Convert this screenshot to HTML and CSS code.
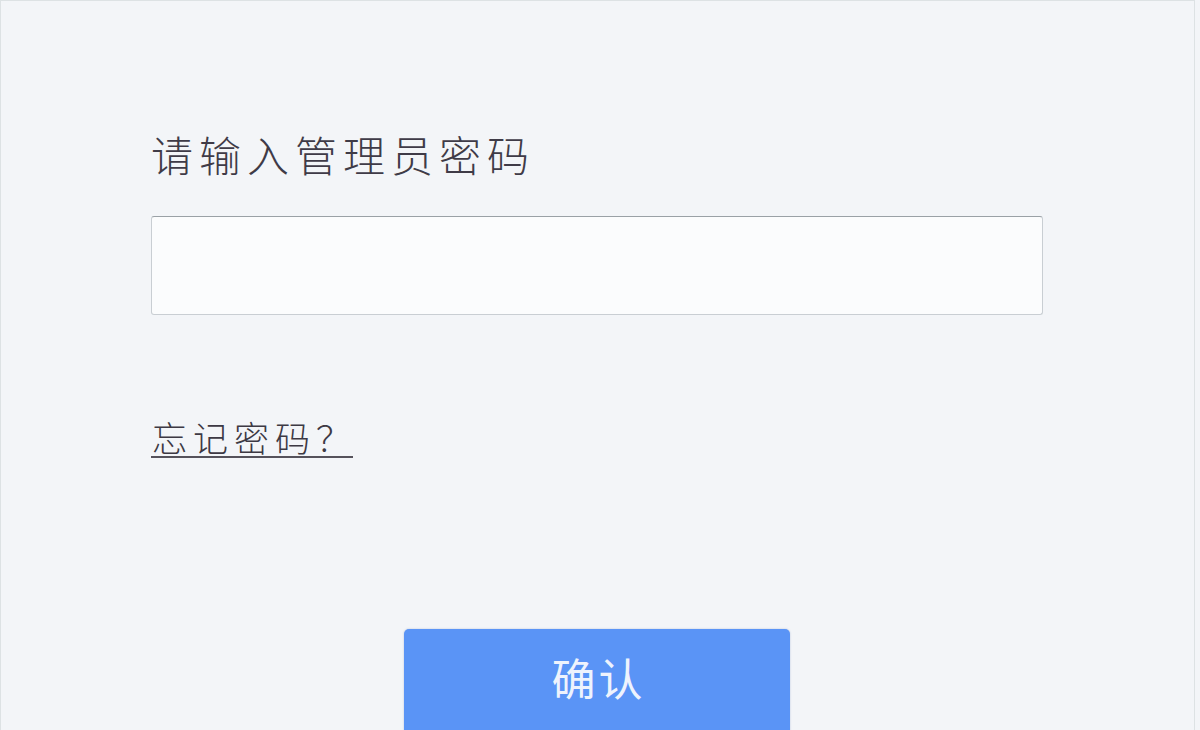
FILE: index.html
```html
<!DOCTYPE html>
<html lang="zh-CN">
<head>
<meta charset="utf-8">
<title>管理员登录</title>
<link rel="stylesheet" href="styles.css">
</head>
<body>
<div class="frame">
  <div class="form">
    <h1 class="title">请输入管理员密<span class="last">码</span></h1>
    <input class="pwd" type="password" aria-label="管理员密码">
    <div class="links"><a class="forgot" href="#">忘记密码<span class="last">？</span></a></div>
    <div class="actions"><button class="confirm" type="button">确<span class="last">认</span></button></div>
  </div>
</div>
</body>
</html>
```
FILE: styles.css
```css
html, body {
  margin: 0;
  padding: 0;
  background: #f3f5f8;
  height: 100%;
  overflow: hidden;
}
body {
  font-family: "Noto Sans CJK SC", "Noto Sans", sans-serif;
}
.frame {
  box-sizing: border-box;
  width: 1195px;
  height: 730px;
  border: 1px solid #dde2e4;
  border-bottom: none;
  background: #f3f5f8;
  padding: 132px 0 0 150px;
}
.form {
  width: 892px;
  display: flex;
  flex-direction: column;
}
.last {
  letter-spacing: 0;
}
.title {
  margin: 0;
  font-size: 42px;
  line-height: 42px;
  font-weight: 300;
  letter-spacing: 6px;
  color: #3f3b47;
}
.pwd {
  box-sizing: border-box;
  margin-top: 41px;
  width: 892px;
  height: 99px;
  border: 1px solid #c9ced3;
  border-top-color: #9aa1a6;
  border-radius: 3px;
  background: #fbfcfd;
  outline: none;
}
.links {
  margin-top: 104px;
}
.forgot {
  display: inline-block;
  font-size: 35px;
  line-height: 35px;
  font-weight: 300;
  letter-spacing: 6px;
  color: #3d3944;
  text-decoration: none;
  padding: 0 2px 2px 1px;
  border-bottom: 2px solid #55525b;
}
.actions {
  margin-top: 171px;
  display: flex;
  justify-content: center;
}
.confirm {
  width: 386px;
  height: 115px;
  border: none;
  border-radius: 5px;
  background: #5a94f6;
  color: #eef3fd;
  font-family: "Noto Sans CJK SC", "Noto Sans", sans-serif;
  font-size: 44px;
  line-height: 44px;
  letter-spacing: 3px;
  padding: 26px 0 0 0;
  display: flex;
  justify-content: center;
  align-items: flex-start;
  box-shadow: 0 0 2px rgba(60, 100, 170, 0.35);
}
```
